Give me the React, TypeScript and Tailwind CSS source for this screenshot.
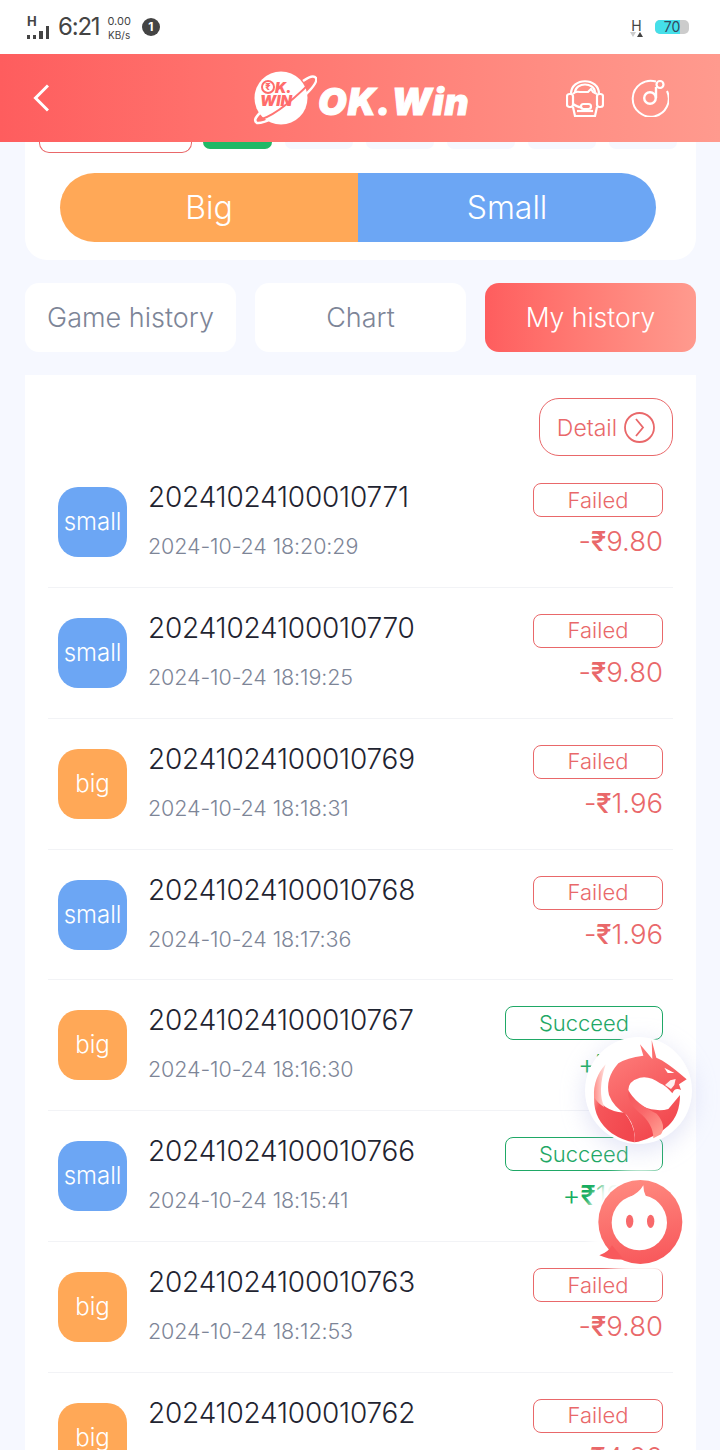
import React from 'react';

type Bet = 'small' | 'big';

interface HistoryRow {
  id: string;
  time: string;
  bet: Bet;
  status: 'Failed' | 'Succeed';
  sign: string;
  amount: string;
}

const rows: HistoryRow[] = [
  { id: '20241024100010771', time: '2024-10-24 18:20:29', bet: 'small', status: 'Failed', sign: '-', amount: '9.80' },
  { id: '20241024100010770', time: '2024-10-24 18:19:25', bet: 'small', status: 'Failed', sign: '-', amount: '9.80' },
  { id: '20241024100010769', time: '2024-10-24 18:18:31', bet: 'big', status: 'Failed', sign: '-', amount: '1.96' },
  { id: '20241024100010768', time: '2024-10-24 18:17:36', bet: 'small', status: 'Failed', sign: '-', amount: '1.96' },
  { id: '20241024100010767', time: '2024-10-24 18:16:30', bet: 'big', status: 'Succeed', sign: '+', amount: '1.92' },
  { id: '20241024100010766', time: '2024-10-24 18:15:41', bet: 'small', status: 'Succeed', sign: '+', amount: '19.60' },
  { id: '20241024100010763', time: '2024-10-24 18:12:53', bet: 'big', status: 'Failed', sign: '-', amount: '9.80' },
  { id: '20241024100010762', time: '2024-10-24 18:11:47', bet: 'big', status: 'Failed', sign: '-', amount: '4.90' },
];

function StatusBar() {
  return (
    <div className="h-[54px] bg-white flex items-center justify-between pl-[27px] pr-[31px] text-[#444]">
      <div className="flex items-center">
        <div className="w-[24px] h-[21px] mb-[1px] flex flex-col justify-between">
          <span className="text-[13px] leading-[10px] font-bold">H</span>
          <div className="flex items-end gap-[3px]">
            <i className="w-[3px] h-[4px] bg-[#444]" />
            <i className="w-[3px] h-[4px] bg-[#444]" />
            <i className="w-[4px] h-[8px] bg-[#444]" />
            <i className="w-[3px] h-[13px] bg-[#444]" />
          </div>
        </div>
        <span className="ml-[7px] text-[24px] leading-none tracking-[-1.2px]">6:21</span>
        <div className="ml-[8px] flex flex-col items-center text-[11px] leading-[14px] mt-[1px]">
          <span>0.00</span>
          <span className="text-[10px]">KB/s</span>
        </div>
        <span className="ml-[11px] w-[18px] h-[18px] rounded-full bg-[#444] text-white text-[12px] font-bold flex items-center justify-center">
          1
        </span>
      </div>
      <div className="flex items-center">
        <div className="flex flex-col items-center mt-[1px]">
          <span className="text-[14px] leading-[13px]">H</span>
          <div className="flex gap-[1px]">
            <i className="w-0 h-0 border-x-[3px] border-x-transparent border-t-[5px] border-t-[#ccc]" />
            <i className="w-0 h-0 border-x-[3px] border-x-transparent border-b-[5px] border-b-[#444]" />
          </div>
        </div>
        <div className="ml-[12px] w-[34px] h-[14px] rounded-[5px] bg-[#ccc] overflow-hidden relative text-[14px] leading-[14px] text-center text-[#34495e]">
          <div className="absolute left-0 top-0 bottom-0 w-[25px] bg-[#45dfe9]" />
          <span className="relative">70</span>
        </div>
      </div>
    </div>
  );
}

function Logo() {
  return (
    <div className="flex items-center">
      <div className="relative w-[64px] h-[56px]">
        <svg viewBox="0 0 64 56" className="absolute inset-0 w-full h-full">
          <circle cx="28" cy="28" r="26.5" fill="#fff" />
          <path
            d="M50 11 Q60 4 63 8 Q66 14 42 34 Q14 54 4 53 Q-1 50 8 42"
            fill="none"
            stroke="#fff"
            strokeWidth="2.6"
          />
          <path d="M4 50 Q22 48 58 12" fill="none" stroke="#ff7472" strokeWidth="1.8" />
        </svg>
        <div className="absolute left-[7px] top-[10px] w-[46px] font-black italic text-[#ff6c6b] text-[15px] leading-[13px]">
          <div className="flex items-center pl-[1px]">
            <span className="w-[14px] h-[14px] rounded-full border-2 border-[#ff6c6b] not-italic text-[9px] leading-[10px] text-center">
              ₹
            </span>
            <span className="tracking-[-0.5px]">K.</span>
          </div>
          <div className="tracking-[0px]">WIN</div>
        </div>
      </div>
      <span className="ml-[1px] mt-[6px] font-black italic text-white text-[37px] leading-none tracking-[1px] [-webkit-text-stroke:1px_white]">
        OK.Win
      </span>
    </div>
  );
}

function Header() {
  return (
    <div className="h-[88px] bg-gradient-to-r from-[#fe5d5e] to-[#ff9a8e] flex items-center pl-[33px] pr-[51px] relative z-10">
      <svg width="16" height="28" viewBox="0 0 16 28" fill="none" stroke="#fff" strokeWidth="3">
        <path d="M15 1.5 L2.5 14 L15 26.5" />
      </svg>
      <div className="ml-[204px]">
        <Logo />
      </div>
      <div className="ml-auto flex items-center gap-[27px]">
        <svg width="38" height="37" viewBox="0 0 38 37" fill="none" stroke="#fff" strokeWidth="2.2">
          <path d="M5 14 C5 -3 33 -3 33 14" />
          <path d="M9 12 C10 2 28 2 29 12" />
          <rect x="1" y="14" width="6" height="13" rx="2.5" />
          <rect x="31" y="14" width="6" height="13" rx="2.5" />
          <path d="M7 14 Q9 11 14 12 L22 12 L25 9 L27 12 L31 14" />
          <path d="M7 24 Q13 28 16 27" />
          <rect x="15" y="24" width="10" height="5" rx="2.5" />
          <path d="M7 27 L9 36 L29 36 L31 27" />
          <path d="M11 31 L27 31" />
        </svg>
        <svg width="38" height="38" viewBox="0 0 38 38" fill="none" stroke="#fff" strokeWidth="2">
          <path d="M25 2.5 A18 18 0 1 0 36 12" />
          <circle cx="19" cy="19" r="5.8" strokeWidth="2.4" />
          <path d="M25 19 L25 8" strokeWidth="2.4" />
          <circle cx="29" cy="5.5" r="3.5" strokeWidth="2.2" />
        </svg>
      </div>
    </div>
  );
}

function BetPanel() {
  return (
    <div className="ml-[25px] mr-[24px] bg-white rounded-b-[22px] h-[118px]">
      <div className="flex pl-[14px]">
        <div className="w-[153px] h-[11px] border border-t-0 border-[#e9686a] rounded-b-[10px]" />
        <div className="ml-[11px] w-[69px] h-[7px] bg-[#1fb866] rounded-b-[10px]" />
        <div className="ml-[13px] flex gap-[13px]">
          <div className="w-[68px] h-[7px] bg-[#f6f8ff] rounded-b-[10px]" />
          <div className="w-[68px] h-[7px] bg-[#f6f8ff] rounded-b-[10px]" />
          <div className="w-[68px] h-[7px] bg-[#f6f8ff] rounded-b-[10px]" />
          <div className="w-[68px] h-[7px] bg-[#f6f8ff] rounded-b-[10px]" />
          <div className="w-[68px] h-[7px] bg-[#f6f8ff] rounded-b-[10px]" />
        </div>
      </div>
      <div className="ml-[35px] mt-[20px] flex h-[69px] text-white text-[32px] font-light">
        <div className="w-[298px] bg-[#ffa857] rounded-l-full flex items-center justify-center">Big</div>
        <div className="w-[298px] bg-[#6ca6f4] rounded-r-full flex items-center justify-center">Small</div>
      </div>
    </div>
  );
}

function Tabs() {
  return (
    <div className="ml-[25px] mr-[24px] mt-[23px] flex justify-between text-[27px] font-light text-[#7d8597]">
      <div className="w-[211px] h-[69px] pt-[2px] bg-white rounded-[14px] flex items-center justify-center">Game history</div>
      <div className="w-[211px] h-[69px] pt-[2px] bg-white rounded-[14px] flex items-center justify-center">Chart</div>
      <div className="w-[211px] h-[69px] rounded-[14px] bg-gradient-to-r from-[#fe5d5e] to-[#ff9a8e] text-white text-[26.5px] flex items-center justify-center">
        My history
      </div>
    </div>
  );
}

function Row({ row }: { row: HistoryRow }) {
  const failed = row.status === 'Failed';
  return (
    <div className="h-[130.85px] border-b border-[#f2f3f6] flex relative shrink-0">
      <div
        className={`ml-[10px] mt-[30px] w-[69px] h-[70px] rounded-[20px] text-white text-[24px] font-light flex items-center justify-center ${
          row.bet === 'small' ? 'bg-[#6ca6f4]' : 'bg-[#ffa857]'
        }`}
      >
        {row.bet}
      </div>
      <div className="ml-[21px] mt-[23px]">
        <div className="text-[28px] leading-[34px] font-light tracking-[-0.2px] text-[#1f2431]">{row.id}</div>
        <div className="mt-[18px] text-[21.5px] leading-[28px] font-light tracking-[-0.1px] text-[#7d8597]">{row.time}</div>
      </div>
      <div className="ml-auto mr-[10px] mt-[26px] flex flex-col items-end">
        <div
          className={`h-[34px] rounded-[8px] border flex items-center justify-center text-[22px] font-light ${
            failed ? 'w-[130px] border-[#e9686a] text-[#e9686a]' : 'w-[158px] border-[#1fa866] text-[#1fa866]'
          }`}
        >
          {row.status}
        </div>
        <div className={`mt-[6px] text-[27.5px] leading-[36px] font-light ${failed ? 'text-[#e9686a]' : 'text-[#17ad60]'}`}>
          {row.sign}
          <span className="font-medium">₹</span>
          {row.amount}
        </div>
      </div>
    </div>
  );
}

function HistoryList() {
  return (
    <div className="ml-[25px] mr-[24px] mt-[23px] bg-white px-[23px] flex-1 overflow-hidden">
      <div className="flex justify-end pt-[23px] h-[82px]">
        <div className="w-[134px] h-[58px] rounded-[20px] border border-[#e9686a] text-[#e9686a] text-[23px] font-light flex items-center justify-center gap-[7px]">
          <span className="mt-[2px]">Detail</span>
          <svg width="31" height="31" viewBox="0 0 31 31" fill="none" stroke="#e9686a" strokeWidth="1.8">
            <circle cx="15.5" cy="15.5" r="14.5" />
            <path d="M12 7 L19 15.5 L12 24" />
          </svg>
        </div>
      </div>
      {rows.map((row) => (
        <Row key={row.id} row={row} />
      ))}
    </div>
  );
}

function DragonButton() {
  return (
    <div className="absolute left-[585px] top-[1037px] w-[107px] h-[107px] rounded-full bg-white shadow-[0_6px_24px_rgba(180,185,230,0.4)]">
      <svg viewBox="0 6 321 321" className="w-full h-full blur-[0.5px]">
        <defs>
          <linearGradient id="dragonBody" x1="0" y1="0" x2="0.5" y2="1">
            <stop offset="0" stopColor="#ff8480" />
            <stop offset="1" stopColor="#f2474e" />
          </linearGradient>
          <linearGradient id="dragonLow" x1="0" y1="0" x2="1" y2="0.5">
            <stop offset="0" stopColor="#ff9d98" />
            <stop offset="0.2" stopColor="#f6565a" />
            <stop offset="1" stopColor="#f2474e" />
          </linearGradient>
          <linearGradient id="dragonTail" x1="0" y1="0" x2="0.7" y2="1">
            <stop offset="0" stopColor="#f4555a" />
            <stop offset="0.5" stopColor="#f9686a" />
            <stop offset="1" stopColor="#ff988e" />
          </linearGradient>
          <linearGradient id="dragonEdge" x1="0" y1="0" x2="1" y2="0">
            <stop offset="0" stopColor="#ff8f8a" />
            <stop offset="1" stopColor="#ffe3e0" />
          </linearGradient>
        </defs>
        <path d="M28 175 Q20 250 80 295 Q115 318 148 322 Q155 280 118 232 Q90 234 62 216 Q40 200 28 175 Z" fill="url(#dragonLow)" />
        <path d="M62 88 Q24 130 27 185 Q38 205 58 216 Q36 170 62 88 Z" fill="url(#dragonEdge)" />
        <path
          d="M165 28 L202 72 L200 15 L214 68 Q245 80 305 133 L282 148 L288 165 Q270 155 262 175 Q240 150 225 145 Q195 122 165 128 Q130 138 130 165 Q134 195 172 214 Q215 232 250 222 L285 180 Q285 240 250 272 Q215 305 160 320 L148 322 Q155 280 125 240 Q85 215 72 180 Q60 130 100 85 Q125 68 175 62 Z"
          fill="url(#dragonBody)"
        />
        <path d="M130 165 Q150 205 215 236 Q245 270 228 298 L205 310 Q205 265 160 230 Q125 200 130 165 Z" fill="url(#dragonTail)" />
        <path d="M238 98 L268 114 L248 114 Z" fill="#fff" />
        <path d="M240 150 L256 136 L272 132 L268 150 L258 162 Z" fill="#fff" opacity="0.9" />
      </svg>
    </div>
  );
}

function ChatButton() {
  return (
    <div className="absolute left-[597px] top-[1178px] w-[88px] h-[88px] rounded-full shadow-[0_0_8px_10px_rgba(255,255,255,0.95)] bg-white">
      <svg viewBox="295 568 264 264" className="w-full h-full blur-[0.3px]">
        <defs>
          <linearGradient id="chatBody" x1="0.3" y1="0" x2="0.5" y2="1">
            <stop offset="0" stopColor="#ff8a80" />
            <stop offset="1" stopColor="#f8595c" />
          </linearGradient>
        </defs>
        <circle cx="425" cy="700" r="126" fill="url(#chatBody)" />
        <path d="M340 770 Q330 790 302 800 Q335 815 375 812 Z" fill="#f8595c" />
        <circle cx="422" cy="702" r="83" fill="#fff" />
        <path d="M434 590 Q434 610 442 624 L392 626 Q422 612 434 590 Z" fill="#fff" />
        <ellipse cx="393" cy="698" rx="11" ry="20" fill="#f8696b" />
        <ellipse cx="456" cy="698" rx="11" ry="20" fill="#f8696b" />
      </svg>
    </div>
  );
}

export default function App() {
  return (
    <div className="relative w-[720px] h-[1450px] overflow-hidden flex flex-col bg-[#f6f8ff] font-['Inter',sans-serif]">
      <StatusBar />
      <Header />
      <BetPanel />
      <Tabs />
      <HistoryList />
      <DragonButton />
      <ChatButton />
    </div>
  );
}
